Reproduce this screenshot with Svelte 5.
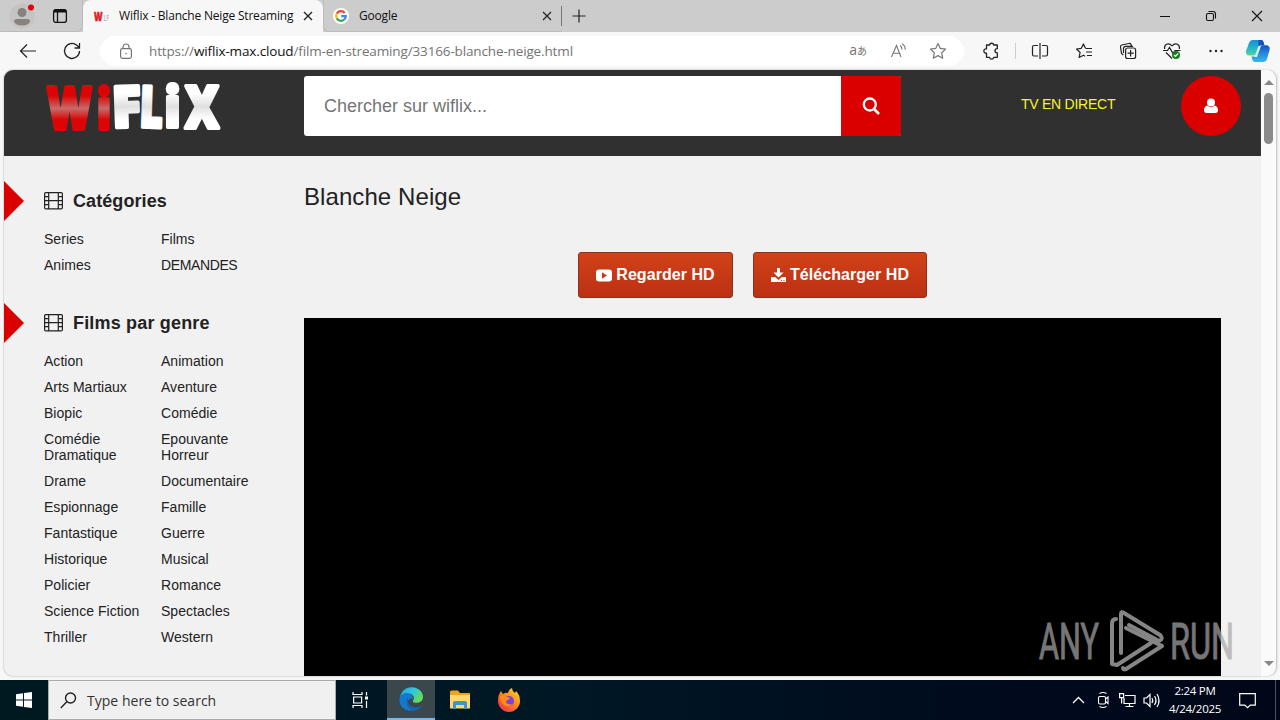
<script>
  const categories = [['Series', 'Films'], ['Animes', 'DEMANDES']];
  const genres = [
    ['Action', 'Animation'],
    ['Arts Martiaux', 'Aventure'],
    ['Biopic', 'Comédie'],
    ['Comédie Dramatique', 'Epouvante Horreur'],
    ['Drame', 'Documentaire'],
    ['Espionnage', 'Famille'],
    ['Fantastique', 'Guerre'],
    ['Historique', 'Musical'],
    ['Policier', 'Romance'],
    ['Science Fiction', 'Spectacles'],
    ['Thriller', 'Western']
  ];
  const sections = [
    { title: 'Catégories', rows: categories },
    { title: 'Films par genre', rows: genres }
  ];
</script>

<div class="screen">
  <div class="tabs">
    <div class="tools">
      <svg class="avatar" width="26" height="26" viewBox="0 0 26 26">
        <circle cx="13" cy="13" r="12.5" fill="#c5c4c2" />
        <circle cx="13" cy="9.5" r="4.5" fill="#88827f" />
        <path d="M5 18.5q0-2.500 2.500-2.500h11q2.500 0 2.500 2.500-1.500 4-8 4t-8-4z" fill="#88827f" />
        <circle cx="22" cy="4.500" r="3" fill="#e3000c" />
      </svg>
      <svg class="workspace" width="16" height="16" viewBox="0 0 16 16" fill="none" stroke="#111">
        <rect x="1.600" y="1.600" width="12.800" height="12.800" rx="2.500" stroke-width="1.300" />
        <path d="M2 3h12" stroke-width="3" /><path d="M5.500 4v10" stroke-width="1.300" />
      </svg>
    </div>
    <div class="tab active">
      <svg class="mark" width="16" height="16" viewBox="0 0 16 16">
        <text x="1" y="12.500" font-family="Open Sans" font-weight="800" font-size="12" textLength="8.500" lengthAdjust="spacingAndGlyphs" fill="#d8211f" stroke="#d8211f" stroke-width=".6">W</text>
        <text x="10.500" y="12.500" font-family="Open Sans" font-size="8" font-weight="700" textLength="5.500" lengthAdjust="spacingAndGlyphs" fill="#bbb">LF</text>
      </svg>
      <span class="tabname">Wiflix - Blanche Neige Streaming</span>
      <svg class="x" width="10" height="10" viewBox="0 0 10 10" stroke="#222" stroke-width="1.300"><path d="M1 1l8 8M9 1l-8 8" /></svg>
    </div>
    <div class="tab second">
      <svg width="16" height="16" viewBox="0 0 16 16" fill="none" stroke-width="2.200">
        <circle cx="8" cy="8" r="8" fill="#fff" />
        <path d="M11.700 5A4.800 4.800 0 0 0 3.800 5.600" stroke="#ea4335" />
        <path d="M3.800 5.600a4.800 4.800 0 0 0 0 4.800" stroke="#fbbc05" />
        <path d="M3.800 10.400a4.800 4.800 0 0 0 7.400 1.100" stroke="#34a853" />
        <path d="M11.200 11.500A4.800 4.800 0 0 0 12.800 8.100H8.200" stroke="#4285f4" />
      </svg>
      <span class="tabname">Google</span>
      <svg class="x" width="10" height="10" viewBox="0 0 10 10" stroke="#222" stroke-width="1.200"><path d="M1 1l8 8M9 1l-8 8" /></svg>
    </div>
    <svg class="plus" width="16" height="16" viewBox="0 0 16 16" stroke="#222" stroke-width="1.200"><path d="M1.500 8h13M8 1.500v13" /></svg>
    <div class="winbuttons">
      <svg width="12" height="12" viewBox="0 0 12 12" stroke="#111"><path d="M1 6.500h10" /></svg>
      <svg width="12" height="12" viewBox="0 0 12 12" fill="none" stroke="#111" stroke-width="1.100"><rect x="1.500" y="3.500" width="7" height="7" rx="1.500" /><path d="M3.500 1.500h4.500q2.500 0 2.500 2.500v4.500" /></svg>
      <svg width="12" height="12" viewBox="0 0 12 12" stroke="#111" stroke-width="1.100"><path d="M1 1l10 10M11 1L1 11" /></svg>
    </div>
  </div>

  <div class="toolbar">
    <svg class="back" width="18" height="16" viewBox="0 0 18 16" fill="none" stroke="#222" stroke-width="1.200"><path d="M8 1.500L1.500 8 8 14.500M1.500 8H17" /></svg>
    <svg class="reload" width="18" height="18" viewBox="0 0 18 18" fill="none" stroke="#222" stroke-width="1.300"><path d="M16.500 9a7.500 7.500 0 1 1-2.700-5.800L16.300 5.500M16.500 1v5h-5" /></svg>
    <div class="address">
      <svg width="14" height="17" viewBox="0 0 14 17" fill="none" stroke="#747474" stroke-width="1.200"><rect x="1.600" y="5.600" width="10.800" height="9.800" rx="1.800" /><path d="M4 5.500V4a3 3 0 0 1 6 0v1.500" /><circle cx="7" cy="10.500" r=".8" fill="#747474" stroke="none" /></svg>
      <span class="url">https://<b>wiflix-max.cloud</b>/film-en-streaming/33166-blanche-neige.html</span>
      <span class="translate">a<small>あ</small></span>
      <svg class="read" width="18" height="16" viewBox="0 0 18 16" fill="none" stroke="#777" stroke-width="1.100"><path d="M2.500 14L7.500 2.500 12 14M4.200 10.300h6.300M11 2.500q2 1.200 2 4M13 .8q3.500 2 3.200 6" /></svg>
      <svg width="18" height="18" viewBox="0 0 18 18" fill="none" stroke="#777" stroke-width="1.200" stroke-linejoin="round"><path d="M9 1.500l2.300 4.900 5.300.7-3.900 3.700 1 5.400L9 13.600l-4.700 2.600 1-5.400L1.400 7.100l5.300-.7z" /></svg>
    </div>
    <div class="actions">
      <svg width="18" height="18" viewBox="0 0 18 18" fill="none" stroke="#222" stroke-width="1.300" stroke-linejoin="round"><path d="M4.500 3H7.500a2.200 2.200 0 0 1 4.300 0h3.500v3.700q-2.300 0-2.300 2.100t2.300 2.100v4.400h-3.500a2.200 2.200 0 0 1-4.300 0H4.500v-4.100a2.200 2.200 0 1 1 0-4.300z" /></svg>
      <i class="divider"></i>
      <svg width="18" height="18" viewBox="0 0 18 18" fill="none" stroke="#222" stroke-width="1.200"><path d="M7 3.500H3Q1.500 3.500 1.500 5v7.500Q1.500 14 3 14h4M11 3.500h4q1.500 0 1.500 1.500v7.500q0 1.500-1.500 1.500h-4M9 1v16" /></svg>
      <svg width="18" height="18" viewBox="0 0 18 18" fill="none" stroke="#222" stroke-width="1.200" stroke-linejoin="round"><path d="M10.500 6.500H17M11 10h6M12 13.500h5M10.500 6.300L8.400 2 6.300 6.300 1.500 7l3.600 3.500-1 5 4.300-2.300 1.800 1" /></svg>
      <svg width="18" height="18" viewBox="0 0 18 18" fill="none" stroke="#222" stroke-width="1.200"><rect x="6.600" y="6" width="10" height="10.500" rx="2" /><path d="M11.600 8v6.500M8.500 11.200h6.300M4.300 13L2.500 11.500 1.500 5Q1.300 3.500 2.700 3L10 1.500q1.500-.2 2 1l.5 1.500M4.500 11V6.500q0-2.200 2.200-2.200H14" /></svg>
      <svg width="18" height="18" viewBox="0 0 18 18" fill="none" stroke="#222" stroke-width="1.200"><path d="M9 4Q6.500.8 3.500 2.200 1 3.600 1.600 7M9 4q2.500-3.200 5.500-1.800Q17 3.600 16.400 7M3 10.500l6 6M0 8.500h4.500l2-3 3.500 6 2-3h5.500" /><circle cx="13" cy="13" r="4" fill="#187c20" stroke="none" /><path d="M11 13l1.500 1.500 2.700-3" stroke="#fff" /></svg>
      <svg width="18" height="18" viewBox="0 0 18 18" fill="#222"><circle cx="3.500" cy="9" r="1.200" /><circle cx="9" cy="9" r="1.200" /><circle cx="14.500" cy="9" r="1.200" /></svg>
      <svg class="copilot" width="26" height="24" viewBox="0 0 26 24">
        <defs><linearGradient id="cp1" x1="0" y1="0" x2="0" y2="1"><stop offset="0" stop-color="#1a8dd8" /><stop offset=".55" stop-color="#22b8c8" /><stop offset="1" stop-color="#58d59b" /></linearGradient><linearGradient id="cp2" x1="0" y1="0" x2="0" y2="1"><stop offset="0" stop-color="#164fc5" /><stop offset=".55" stop-color="#268fdd" /><stop offset="1" stop-color="#38b7ee" /></linearGradient></defs>
        <path d="M8 1h8q2 0 2.500 2l.8 3h-3q-2 0-2.700 2l-2 6q-.8 2.500-3 2.500H4.500Q.5 16.500 1 12L4 4Q5 1 8 1z" fill="url(#cp1)" />
        <path d="M13.500 1H16q2 0 2.500 2l.9 3.200H16q-2 0-2.500 2z" fill="#1750b8" />
        <path d="M18 23h-8q-2 0-2.500-2l-1-3.500h3q2 0 2.600-2l2.400-7q.7-2.300 3-2.300h4.500q3.500 1 2.500 5L22 20q-1 3-4 3z" fill="url(#cp2)" />
        <path d="M13.500 7h2.500L12 18H9.500z" fill="#d9f8f5" />
      </svg>
    </div>
  </div>

  <div class="view">
    <div class="page">
      <header>
        <svg class="logo" width="184" height="60" viewBox="0 0 184 60">
          <defs>
            <linearGradient id="red" gradientUnits="userSpaceOnUse" x1="0" y1="8" x2="0" y2="55"><stop offset=".25" stop-color="#dc0404" /><stop offset=".52" stop-color="#c86a6a" /><stop offset=".76" stop-color="#dc0404" /></linearGradient>
            <linearGradient id="white" gradientUnits="userSpaceOnUse" x1="0" y1="8" x2="0" y2="55"><stop offset=".2" stop-color="#fff" /><stop offset=".48" stop-color="#e0e0e0" /><stop offset=".75" stop-color="#fff" /></linearGradient>
          </defs>
          <g font-family="Open Sans" font-weight="800" stroke-linejoin="round" stroke-width="4">
            <g fill="url(#red)" stroke="url(#red)">
              <text x="7" y="52.500" font-size="59" textLength="45" lengthAdjust="spacingAndGlyphs">W</text>
              <text x="57" y="52.500" font-size="54" textLength="14" lengthAdjust="spacingAndGlyphs">i</text>
            </g>
            <g fill="url(#white)" stroke="url(#white)">
              <text x="72" y="51" font-size="57" textLength="29" lengthAdjust="spacingAndGlyphs" transform="rotate(-2 85 30)">F</text>
              <text x="100" y="51" font-size="57" textLength="23" lengthAdjust="spacingAndGlyphs" transform="rotate(2 110 30)">L</text>
              <text x="124.500" y="51" font-size="54" textLength="16" lengthAdjust="spacingAndGlyphs">i</text>
              <text x="145" y="52" font-size="59" textLength="34" lengthAdjust="spacingAndGlyphs">X</text>
            </g>
          </g>
        </svg>
        <div class="search"><span>Chercher sur wiflix...</span>
          <button aria-label="Chercher"><svg width="18" height="18" viewBox="0 0 18 18" fill="none" stroke="#fff"><circle cx="7.800" cy="7.500" r="6" stroke-width="2.300" /><path d="M12 12l5 5" stroke-width="2.600" /></svg></button>
        </div>
        <a class="live" href="#live">TV EN DIRECT</a>
        <div class="user"><svg width="16" height="16" viewBox="0 0 16 16" fill="#fff"><circle cx="8" cy="4.500" r="4" /><path d="M4.200 7.500Q8 11 11.800 7.500 15 8.500 15 12q0 3-2.500 3h-9Q1 15 1 12q0-3.500 3.200-4.500z" /></svg></div>
      </header>
      <div class="body">
        <aside>
          {#each sections as section}
            <section>
              <h2>
                <svg class="arrow" width="20" height="40" viewBox="0 0 20 40"><path d="M0 0l20 20L0 40z" fill="#db0000" /></svg>
                <svg class="film" width="19" height="18" viewBox="0 0 19 18" fill="none" stroke="#222" stroke-width="1.200"><rect x=".6" y=".6" width="17.800" height="16.300" rx="1.200" /><path d="M4.700 1v16M14.300 1v16M4.700 8.700h9.600M1 4.700h3.700M1 8.700h3.700M1 12.700h3.700M14.300 4.700H18M14.300 8.700H18M14.300 12.700H18" /></svg>
                <span class:wide={section.title.includes(' ')}>{section.title}</span>
              </h2>
              <div class="list">
                {#each section.rows as row}
                  {#each row as label}<a href="#genre" class:caps={label === 'DEMANDES'}>{label}</a>{/each}
                {/each}
              </div>
            </section>
          {/each}
        </aside>
        <main>
          <h1>Blanche Neige</h1>
          <div class="cta">
            <button><svg width="16" height="13" viewBox="0 0 16 13"><rect y=".5" width="16" height="12" rx="3" fill="#fff" /><path d="M6 3.300l5 3.200-5 3.200z" fill="#c5391a" /></svg>Regarder HD</button>
            <button><svg width="15" height="15" viewBox="0 0 15 15" fill="#fff"><path d="M6 0h3v4.500h3.500l-5 5-5-5H6z" /><path d="M0 9h4l3.500 3 3.500-3h4v5H0z" /><path d="M10 12.500h1M12.500 12.500h1" stroke="#c5391a" /></svg>Télécharger HD</button>
          </div>
          <div class="player"></div>
        </main>
      </div>
    </div>
    <div class="scroll"><i class="up"></i><i class="thumb"></i><i class="down"></i></div>
    <svg class="watermark" width="210" height="70" viewBox="0 0 210 70">
      <g fill="#a8a8a8" stroke="#a8a8a8" stroke-width="1" opacity=".7" font-family="Roboto" font-size="50">
        <text x="8" y="53" textLength="60" lengthAdjust="spacingAndGlyphs">ANY</text>
        <text x="139" y="53" textLength="64" lengthAdjust="spacingAndGlyphs">RUN</text>
      </g>
      <g fill="none" stroke="#858585" stroke-width="4" stroke-linejoin="round" stroke-linecap="round">
        <path d="M85 13q-4 0-4 5v40l5 1 34-22" /><path d="M90 47V8q0-3 3-1l36 22q4 4-1 6L98 19" /><path d="M95 22l36 18-36 23q-3 1-3-1" />
      </g>
    </svg>
  </div>

  <footer>
    <div class="start"><svg width="16" height="16" viewBox="0 0 16 16" fill="#fff"><path d="M0 2.200l7-1V7.500H0zM8 1l8-1v7.500H8zM0 8.500h7v6.300l-7-1zM8 8.500h8V16l-8-1z" /></svg></div>
    <div class="finder"><svg width="17" height="17" viewBox="0 0 17 17" fill="none" stroke="#222" stroke-width="1.400"><circle cx="10.500" cy="6" r="5" /><path d="M7 9.600L.8 16" /></svg><span>Type here to search</span></div>
    <div class="app view-tasks"><svg width="17" height="16" viewBox="0 0 17 16" fill="none" stroke="#fff" stroke-width="1.200"><path d="M1 0v2.500h9V0M1 16v-2.500h9V16M1.600 5h8v6h-8zM14.500 0v3.500M14.500 9v7" /><path d="M13 4.500h3v3h-3z" fill="#fff" stroke="none" /></svg></div>
    <div class="app current"><svg width="24" height="24" viewBox="0 0 24 24">
      <defs><linearGradient id="edge" x1="0" y1="0" x2="1" y2=".5"><stop stop-color="#249ee2" /><stop offset=".55" stop-color="#31c6dd" /><stop offset="1" stop-color="#65dc54" /></linearGradient></defs>
      <path d="M1 11C2 4 7 0 13 .3c7 .3 11 5 11 9.500 0 4-3 6-7 6-3 0-4-1.400-2.500-3 1.500-3-1-6-5-6-4 0-7 2-8.500 6z" fill="url(#edge)" />
      <path d="M.5 12C1 8 4.500 6 8.500 6c4 0 6 3 5 6-2-1-5 1-5 4 0 4 5 6.500 13 3.500-3 4-8 5-12 4-6-1-9.500-6-9-11.500z" fill="#1478cf" />
      <path d="M9 10c-3 5-1 12 5 13.500 4 0 7-2 8.500-4.500-6 2.500-13 1-13.500-4z" fill="#1762ae" />
    </svg></div>
    <div class="app"><svg width="22" height="20" viewBox="0 0 22 20"><path d="M1 2q0-1.500 1.500-1.500H9L11 3h10v15H1z" fill="#eaa51f" /><path d="M1 5h20v13.500H1z" fill="#ffda6b" /><path d="M4 19v-6q0-2 2-2h10q2 0 2 2v6h-3v-4H7v4z" fill="#3b93cf" /></svg></div>
    <div class="app"><svg width="24" height="24" viewBox="0 0 24 24">
      <defs><linearGradient id="fire" x1="1" y1="0" x2=".2" y2="1"><stop stop-color="#ffe332" /><stop offset=".5" stop-color="#ff8a18" /><stop offset="1" stop-color="#f22d54" /></linearGradient></defs>
      <path d="M4 3l2 3q3-2 5-1 1-4 4-5 0 3 3 5l1-2q4 4 4 10c0 6-5 11-11 11S1 19 1 13Q1 7 4 3z" fill="url(#fire)" /><circle cx="12" cy="13" r="5" fill="#7c42d8" /><path d="M3 8q3-2 7 1l3 1q-1 2-4 3 0 4 6 3-3 4-8 1-4-3-4-9z" fill="#ff8b18" />
    </svg></div>
    <div class="tray">
      <svg width="13" height="8" viewBox="0 0 13 8" fill="none" stroke="#fff" stroke-width="1.300"><path d="M1 7l5.500-5.500L12 7" /></svg>
      <svg class="camera" width="14" height="18" viewBox="0 0 14 18" fill="none" stroke="#fff" stroke-width="1.100"><rect x="2.500" y="5.500" width="7" height="7.500" rx="1.500" /><path d="M9.500 8l2.500-2v6.500l-2.500-2M3.500 2.500q3.500-2 7 0M3.500 15.500q3.500 2 7 0" /></svg>
      <svg width="17" height="16" viewBox="0 0 17 16" fill="none" stroke="#fff" stroke-width="1.200"><path d="M6 3.500h10v8H5V6M10.500 12v2.500M6.500 14.500h8M.6 1.600h4v4h-4zM2.600 5.600v6" /></svg>
      <svg class="volume" width="17" height="15" viewBox="0 0 17 15" fill="none" stroke="#fff" stroke-width="1.200"><path d="M1 5h2.500L7 1.500v12L3.500 10H1zM9 5q1.500 2.500 0 5M11.500 3q3 4.500 0 9M14 1q4 6.500 0 13" /></svg>
    </div>
    <div class="clock"><span>2:24 PM</span><span>4/24/2025</span></div>
    <svg class="notice" width="17" height="17" viewBox="0 0 17 17" fill="none" stroke="#fff" stroke-width="1.200"><path d="M.7 1.600h15.600v11.500h-5L8.500 15.700l-2.700-2.600H.7z" /></svg>
    <i class="peek"></i>
  </footer>
</div>

<style>
  :global(body) { margin: 0; overflow: hidden; }
  * { box-sizing: border-box; }
  svg { display: block; flex: none; overflow: visible; }
  a { color: inherit; text-decoration: none; }
  button { border: 0; padding: 0; font: inherit; }
  .screen { width: 1280px; height: 720px; display: flex; flex-direction: column; overflow: hidden; background: #f7f7f7; font-family: "Liberation Sans", Arial, sans-serif; }
  .tabs { height: 32px; flex: none; display: flex; align-items: center; background: #ccc; font-family: "Open Sans", sans-serif; font-size: 12px; color: #111; }
  .tools { width: 83px; height: 32px; display: flex; align-items: center; padding: 0 15px 0 9px; justify-content: space-between; border-bottom: 1px solid #bbb; border-right: 1px solid #bbb; border-radius: 0 0 6px 0; }
  .avatar { margin-top: 1px; }
  .workspace { margin-right: -1px; }
  .tab { height: 32px; display: flex; align-items: center; }
  .active { width: 240px; padding: 0 10px; background: #f7f7f7; border-radius: 8px 8px 0 0; }
  .tabname { flex: 1; margin-left: 10px; padding-bottom: 1px; white-space: nowrap; letter-spacing: -.2px; }
  .second { width: 239px; padding: 0 10px 0 9px; border-left: 1px solid #bbb; border-bottom: 1px solid #bbb; border-radius: 0 0 0 6px; background: linear-gradient(#777, #777) right 6px / 1px 20px no-repeat; }
  .second .tabname { padding-bottom: 0; }
  .plus { margin-left: 9px; }
  .winbuttons { margin-left: auto; display: flex; gap: 34px; padding-right: 17px; }
  .toolbar { height: 38px; flex: none; display: flex; align-items: center; padding-left: 19px; font-family: "Open Sans", sans-serif; }
  .reload { margin-left: 26px; }
  .address { width: 864px; height: 30px; margin-left: 19px; padding: 0 17px 0 19px; border-radius: 16px; background: #fff; display: flex; align-items: center; font-size: 13.5px; color: #747474; }
  .url { margin-left: 16px; white-space: nowrap; letter-spacing: -.14px; }
  .url b { font-weight: 400; color: #111; }
  .translate { margin-left: auto; font-size: 14px; line-height: 16px; margin-top: -2px; }
  .translate small { font-family: "Noto Sans CJK JP", sans-serif; font-size: 10px; }
  .read { margin: 0 22px; }
  .actions { flex: 1; display: flex; align-items: center; gap: 26px; padding-left: 18px; }
  .divider { width: 1px; height: 16px; background: #ccc; margin: 0 -11px; }
  .copilot { margin-left: -6px; }
  .view { height: 610px; flex: none; display: flex; padding: 0 4px 4px; position: relative; }
  .page { width: 1257px; height: 606px; border-radius: 9px 0 0 9px; background: #f1f1f1; box-shadow: 0 0 2px #999; }
  header { height: 86px; background: #303030; display: flex; align-items: flex-start; padding: 6px 20px 0 36px; border-radius: 9px 0 0; }
  .search { width: 597px; height: 60px; margin-left: 80px; display: flex; background: #fff; border-radius: 3px; align-items: center; padding-left: 20px; font-size: 18px; color: #757575; }
  .search button { width: 60px; height: 60px; margin-left: auto; background: #db0000; display: grid; place-items: center; border-radius: 0 2px 2px 0; }
  .live { color: #f6f626; font-size: 14px; line-height: 16px; margin: 20px 0 0 120px; white-space: nowrap; letter-spacing: -.25px; }
  .user { width: 60px; height: 60px; border-radius: 50%; margin-left: auto; background: #db0000; display: grid; place-items: center; }
  .body { display: flex; color: #222; }
  aside { width: 300px; padding-top: 25px; }
  section { margin-bottom: 30px; }
  h2 { height: 40px; margin: 0 0 10px; font-size: 18px; line-height: 40px; display: flex; align-items: center; white-space: nowrap; letter-spacing: .08px; }
  .wide { letter-spacing: .18px; }
  .film { margin: 0 10px 0 20px; }
  .list { display: grid; grid-template-columns: 117px 117px; row-gap: 10px; padding-left: 40px; font-size: 14px; line-height: 16px; }
  .list a { width: 107px; letter-spacing: .03px; }
  .list .caps { letter-spacing: -.38px; }
  .list a:nth-child(7), .list a:nth-child(8) { width: 82px; }
  main { width: 917px; }
  h1 { font-size: 24px; font-weight: 400; line-height: 28px; margin: 27px 0 41px; letter-spacing: .08px; }
  .cta { display: flex; justify-content: center; gap: 20px; height: 46px; margin-bottom: 20px; padding-right: 20px; }
  .cta button { width: 155px; border: 1px solid #8d3020; border-radius: 3px; background: linear-gradient(#d14218, #bc3013); color: #fff; font-size: 16px; font-weight: 700; display: flex; justify-content: center; align-items: center; gap: 4px; white-space: nowrap; letter-spacing: .06px; }
  .cta button:last-child { width: 174px; }
  .player { height: 358px; background: #000; }
  .scroll { width: 15px; border-radius: 0 9px 9px 0; background: #fafafa; box-shadow: 1px 0 2px #bbb; display: flex; flex-direction: column; align-items: center; padding: 10px 0; }
  .up, .down { border: 5px solid transparent; height: 0; }
  .up { border-top: 0; border-bottom-color: #888; }
  .thumb { width: 9px; height: 51px; border-radius: 5px; background: #8b8b8b; margin-top: 8px; }
  .down { border-bottom: 0; border-top-color: #888; margin-top: auto; }
  .watermark { position: absolute; left: 1031px; top: 536px; }
  footer { height: 40px; display: flex; align-items: center; background: linear-gradient(90deg, #001820, #001725 45%, #000b1e 75%, #000718); color: #fff; font-family: "Open Sans", sans-serif; }
  .start { width: 48px; display: grid; place-items: center; }
  .finder { width: 288px; height: 40px; border: 1px solid #aaa; background: #f0f0f0; color: #333; display: flex; align-items: center; padding-left: 11px; font-size: 14px; }
  .finder span { margin-left: 10px; white-space: nowrap; letter-spacing: .02px; }
  .app { width: 49px; height: 40px; display: grid; place-items: center; }
  .view-tasks { width: 51px; padding-right: 3px; }
  .current { width: 48px; background: #3a474d; border-bottom: 2px solid #76b9ed; }
  .tray { display: flex; align-items: center; gap: 9px; margin-left: auto; }
  .camera { margin-left: 2px; }
  .volume { margin-left: -2px; }
  .clock { width: 68px; margin-left: 1px; font-size: 11.5px; line-height: 18px; text-align: center; display: flex; flex-direction: column; letter-spacing: -.25px; }
  .notice { margin-left: 10px; }
  .peek { width: 1px; height: 40px; background: #4b5360; margin: 0 4px 0 19px; }
</style>
